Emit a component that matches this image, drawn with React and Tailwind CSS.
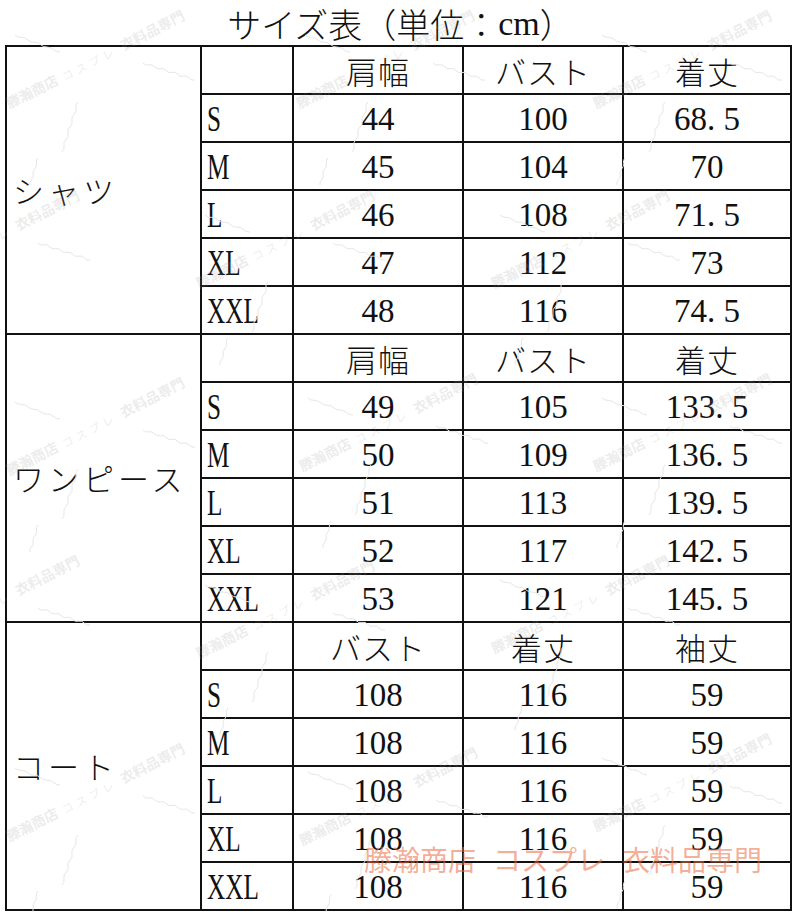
import React from "react";

const groups = [
  {
    name: "シャツ",
    head: ["肩幅", "バスト", "着丈"],
    rows: [
      ["S", "44", "100", "68.5"],
      ["M", "45", "104", "70"],
      ["L", "46", "108", "71.5"],
      ["XL", "47", "112", "73"],
      ["XXL", "48", "116", "74.5"],
    ],
  },
  {
    name: "ワンピース",
    head: ["肩幅", "バスト", "着丈"],
    rows: [
      ["S", "49", "105", "133.5"],
      ["M", "50", "109", "136.5"],
      ["L", "51", "113", "139.5"],
      ["XL", "52", "117", "142.5"],
      ["XXL", "53", "121", "145.5"],
    ],
  },
  {
    name: "コート",
    head: ["バスト", "着丈", "袖丈"],
    rows: [
      ["S", "108", "116", "59"],
      ["M", "108", "116", "59"],
      ["L", "108", "116", "59"],
      ["XL", "108", "116", "59"],
      ["XXL", "108", "116", "59"],
    ],
  },
];

function Num({ v }) {
  const parts = v.split(".");
  return (
    <span className="font-['Liberation_Serif',serif] text-[33px] leading-none text-[#111] pt-[3px]">
      {parts[0]}
      {parts.length > 1 && (
        <>
          <span className="inline-block w-[0.5em] text-left">.</span>
          {parts[1]}
        </>
      )}
    </span>
  );
}

const wmPositions = [
  [10, 110], [300, 110], [597, 110],
  [200, 290], [495, 290], [-95, 290],
  [10, 477], [303, 473], [597, 473],
  [200, 660], [495, 655], [-95, 655],
  [10, 843], [303, 847], [597, 833],
];

function wave(x1, y1, x2, y2, n = 8, amp = 2.5) {
  const dx = x2 - x1;
  const dy = y2 - y1;
  const len = Math.hypot(dx, dy);
  const nx = -dy / len;
  const ny = dx / len;
  let d = `M${x1},${y1}`;
  for (let i = 1; i <= n; i++) {
    const t = i / n;
    const tm = (i - 0.5) / n;
    const s = i % 2 ? amp : -amp;
    const cx = x1 + dx * tm + nx * s;
    const cy = y1 + dy * tm + ny * s;
    d += ` Q${cx.toFixed(1)},${cy.toFixed(1)} ${(x1 + dx * t).toFixed(1)},${(y1 + dy * t).toFixed(1)}`;
  }
  return d;
}

function Squiggles() {
  const paths = [];
  wmPositions.forEach(([x, y], i) => {
    paths.push(<path key={`a${i}`} d={wave(x + 133, y - 47, x + 185, y - 30, 9, 2)} />);
    paths.push(<path key={`b${i}`} d={wave(x + 68, y - 8, x + 52, y + 42, 8, 2)} />);
    paths.push(<path key={`c${i}`} d={wave(x + 28, y + 48, x + 20, y + 75, 5, 1.5)} />);
    paths.push(<path key={`d${i}`} d={wave(x + 5, y - 75, x + 50, y - 58, 7, 1.5)} />);
  });
  return (
    <svg
      className="pointer-events-none absolute inset-0"
      width="797"
      height="912"
      viewBox="0 0 797 912"
      fill="none"
      stroke="#e6e6e6"
      strokeWidth="1"
    >
      {paths}
    </svg>
  );
}

function Watermarks() {
  return (
    <div className="pointer-events-none absolute inset-0 overflow-hidden">
      {wmPositions.map(([x, y], i) => (
        <div
          key={i}
          className="absolute origin-bottom-left -rotate-[27deg] whitespace-nowrap font-['Noto_Sans_CJK_JP',sans-serif] text-[14px] font-bold leading-none text-[#9a9a9a]/20"
          style={{ left: x, top: y - 14 }}
        >
          <span>滕瀚商店</span>
          <span className="mx-[6px] text-[11px] font-normal tracking-[4px]">コスプレ</span>
          <span>衣料品専門</span>
        </div>
      ))}
    </div>
  );
}

export default function App() {
  return (
    <div className="relative h-[912px] w-[797px] overflow-hidden bg-white">
      <div className="flex h-[45px] items-center justify-center pl-[4px] pt-[3px] font-['Noto_Sans_CJK_JP',sans-serif] text-[34px] font-light leading-none text-[#111]">
        サイズ表（単位：<span className="font-['Liberation_Serif',serif]">cm</span>）
      </div>
      <div className="ml-[5px] grid w-[787px] grid-cols-[193px_90px_168px_158px_166px] grid-rows-[repeat(18,46px)] gap-[2px] bg-[#111] p-[2px]">
        {groups.map((g) => (
          <React.Fragment key={g.name}>
            <div className="row-span-6 flex items-center bg-white pl-[6px] font-['Noto_Sans_CJK_JP',sans-serif] text-[31px] font-light tracking-[4px] text-[#111]">
              {g.name}
            </div>
            <div className="bg-white" />
            {g.head.map((h, i) => (
              <div
                key={i}
                className="flex items-center justify-center bg-white font-['Noto_Sans_CJK_JP',sans-serif] text-[31px] font-light leading-none tracking-[1px] text-[#111]"
              >
                {h}
              </div>
            ))}
            {g.rows.map((r) => (
              <React.Fragment key={r[0]}>
                <div className="flex items-center bg-white pl-[5px]">
                  <span className="inline-block origin-left scale-x-[0.72] font-['Liberation_Serif',serif] text-[35px] leading-none text-[#111] pt-[3px]">
                    {r[0]}
                  </span>
                </div>
                {r.slice(1).map((v, i) => (
                  <div key={i} className="flex items-center justify-center bg-white">
                    <Num v={v} />
                  </div>
                ))}
              </React.Fragment>
            ))}
          </React.Fragment>
        ))}
      </div>
      <Squiggles />
      <Watermarks />
      <div className="pointer-events-none absolute left-[364px] top-[845px] flex whitespace-nowrap font-['Noto_Sans_CJK_JP',sans-serif] text-[28px] leading-none text-[#ec6a3f]/55">
        <span>滕瀚商店</span>
        <span className="ml-[17px]">コスプレ</span>
        <span className="ml-[17px]">衣料品専門</span>
      </div>
    </div>
  );
}
